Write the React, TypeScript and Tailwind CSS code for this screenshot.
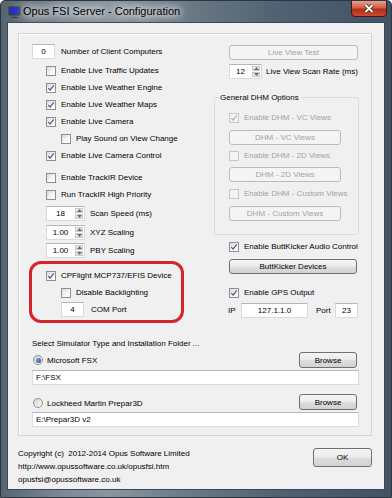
import React from 'react';

type Children = { children?: React.ReactNode };

const Check = ({ checked, disabled }: { checked?: boolean; disabled?: boolean }) => (
  <span
    className={
      disabled
        ? 'w-[10px] h-[10px] shrink-0 border border-[#c6c6c6] bg-[#f4f4f4] flex items-center justify-center'
        : 'w-[10px] h-[10px] shrink-0 border border-[#8e8f8f] bg-[linear-gradient(135deg,#d9d9d9,#f7f7f7_60%,#ffffff)] flex items-center justify-center'
    }
  >
    {checked && (
      <svg width="8" height="8" viewBox="0 0 8 8">
        <path
          d="M1.3 4.1 L3.1 6.1 L6.8 1.4"
          stroke={disabled ? '#b0b0b0' : '#4a5a8c'}
          strokeWidth="1.3"
          fill="none"
        />
      </svg>
    )}
  </span>
);

const CheckRow = ({
  label,
  checked,
  disabled,
  indent = 'pl-[14px]',
}: {
  label: string;
  checked?: boolean;
  disabled?: boolean;
  indent?: string;
}) => (
  <div className={`h-[17px] flex items-center gap-[5px] ${indent}`}>
    <Check checked={checked} disabled={disabled} />
    <span className={disabled ? 'text-[#a2a2a2]' : 'text-black'}>{label}</span>
  </div>
);

const Btn = ({
  children,
  disabled,
  className = '',
}: Children & { disabled?: boolean; className?: string }) => (
  <div
    className={
      (disabled
        ? 'border border-[#b8bcbf] bg-[#f4f4f4] text-[#a2a2a2]'
        : 'border border-[#707070] bg-[linear-gradient(#f4f4f4,#ececec_48%,#dedede_52%,#d2d2d2)] text-black') +
      ' rounded-[3px] flex items-center justify-center ' +
      className
    }
  >
    {children}
  </div>
);

const TextBox = ({
  value,
  className = '',
  align = 'center',
}: {
  value: string;
  className?: string;
  align?: 'center' | 'left';
}) => (
  <div
    className={
      'h-[15px] bg-white border border-[#d7dadf] border-t-[#b3b6bb] flex items-center ' +
      (align === 'center' ? 'justify-center ' : 'justify-start pl-[3px] ') +
      className
    }
  >
    {value}
  </div>
);

const Spinner = ({ value, width }: { value: string; width: string }) => (
  <div className={`h-[15px] ${width} bg-white border border-[#d7dadf] border-t-[#b3b6bb] flex`}>
    <div className="flex-1 flex items-center justify-center">{value}</div>
    <div className="w-[10px] flex flex-col p-[1px] gap-[1px]">
      <div className="flex-1 bg-[linear-gradient(#f3f3f3,#dcdcdc)] border border-[#c9c9c9] flex items-center justify-center">
        <svg width="5" height="3" viewBox="0 0 5 3">
          <path d="M0 3 L2.5 0 L5 3 Z" fill="#6d6d6d" />
        </svg>
      </div>
      <div className="flex-1 bg-[linear-gradient(#f3f3f3,#dcdcdc)] border border-[#c9c9c9] flex items-center justify-center">
        <svg width="5" height="3" viewBox="0 0 5 3">
          <path d="M0 0 L2.5 3 L5 0 Z" fill="#6d6d6d" />
        </svg>
      </div>
    </div>
  </div>
);

const Radio = ({ selected }: { selected?: boolean }) => (
  <span className="w-[10px] h-[10px] shrink-0 rounded-full border border-[#8e8f8f] bg-[linear-gradient(135deg,#d4d4d4,#fafafa)] flex items-center justify-center">
    {selected && (
      <span className="w-[5px] h-[5px] rounded-full bg-[radial-gradient(circle_at_35%_35%,#7fa0c8,#1b3f6e)]" />
    )}
  </span>
);

const TitleBar = () => (
  <div className="h-[21px] flex items-start relative">
    <div className="pl-[7px] pt-[5px]">
      <svg width="13" height="12" viewBox="0 0 13 12">
        <rect x="0.5" y="0.5" width="12" height="9" fill="#3c3c3c" />
        <rect x="2" y="2" width="9" height="6" fill="#1e2fd6" />
        <rect x="5" y="9.5" width="3" height="1.5" fill="#5a5a5a" />
        <rect x="3" y="11" width="7" height="1" fill="#3c3c3c" />
      </svg>
    </div>
    <div className="ml-[2px] pt-[4px] text-[11px] leading-[12px] text-black [text-shadow:0_0_6px_#fff,0_0_10px_#fff,0_0_14px_rgba(255,255,255,0.9)]">
      Opus FSI Server - Configuration
    </div>
    <div className="ml-auto mr-[4px] w-[36px] h-[17px] -mt-px rounded-b-[4px] border border-[#4a1410] bg-[linear-gradient(#e8a08d,#cf6048_45%,#b32e18_55%,#cc4a30)] flex items-center justify-center">
      <svg width="10" height="9" viewBox="0 0 10 9">
        <path d="M1.5 1 L8.5 8 M8.5 1 L1.5 8" stroke="#3a1a14" strokeWidth="3.4" />
        <path d="M1.5 1 L8.5 8 M8.5 1 L1.5 8" stroke="#ffffff" strokeWidth="1.9" />
      </svg>
    </div>
  </div>
);

const App: React.FC = () => {
  return (
    <div className="w-[392px] h-[498px] overflow-hidden border border-[#2b3641] rounded-t-[5px] bg-[linear-gradient(90deg,#56646f,#7b8893_15%,#8a969f_28%,#6a7985_48%,#4f6172_72%,#405365)] flex flex-col font-['Liberation_Sans',Arial,sans-serif] text-[8px] leading-[11px] text-black">
      <TitleBar />

      <div className="mx-[6px] mb-[7px] flex-1 border border-[#3b4754] bg-[#f0f0f0] flex flex-col">
        {/* Main settings panel */}
        <div className="ml-[10px] mt-[10px] w-[354px] h-[403px] border border-[#d5d5d5] shadow-[inset_1px_1px_0_#fff] pl-[13px] pr-[12px] pt-[10px] flex flex-col">
          <div className="flex">
            {/* Left column */}
            <div className="w-[182px] flex flex-col">
              <div className="h-[15px] flex items-center gap-[6px]">
                <TextBox value="0" className="w-[23px]" />
                <span>Number of Client Computers</span>
              </div>
              <div className="mt-[3px]">
                <CheckRow label="Enable Live Traffic Updates" />
                <CheckRow label="Enable Live Weather Engine" checked />
                <CheckRow label="Enable Live Weather Maps" checked />
                <CheckRow label="Enable Live Camera" checked />
                <CheckRow label="Play Sound on View Change" indent="pl-[29px]" />
                <CheckRow label="Enable Live Camera Control" checked />
              </div>
              <div className="mt-[5px]">
                <CheckRow label="Enable TrackIR Device" />
                <CheckRow label="Run TrackIR High Priority" />
              </div>
              <div className="mt-[3px] pl-[14px] flex items-center gap-[5px]">
                <Spinner value="18" width="w-[39px]" />
                <span>Scan Speed (ms)</span>
              </div>
              <div className="mt-[4px] pl-[14px] flex items-center gap-[5px]">
                <Spinner value="1.00" width="w-[39px]" />
                <span>XYZ Scaling</span>
              </div>
              <div className="mt-[3px] pl-[14px] flex items-center gap-[5px]">
                <Spinner value="1.00" width="w-[39px]" />
                <span>PBY Scaling</span>
              </div>

              {/* Highlighted CPFlight block */}
              <div className="mt-[3px] -ml-[3px] w-[155px] h-[62px] border-[3px] border-[#d6232c] rounded-[12px] pt-[3px]">
                <CheckRow label="CPFlight MCP737/EFIS Device" checked />
                <CheckRow label="Disable Backlighting" indent="pl-[29px]" />
                <div className="mt-px pl-[29px] flex items-center gap-[7px]">
                  <TextBox value="4" className="w-[23px]" />
                  <span>COM Port</span>
                </div>
              </div>
            </div>

            {/* Right column */}
            <div className="w-[145px] flex flex-col">
              <Btn disabled className="mt-px ml-[15px] w-[129px] h-[15px]">
                Live View Test
              </Btn>
              <div className="mt-[4px] ml-[15px] flex items-center gap-[4px]">
                <Spinner value="12" width="w-[33px]" />
                <span>Live View Scan Rate (ms)</span>
              </div>

              <fieldset className="mt-[13px] w-[145px] h-[143px] border border-[#d5dfe5] rounded-[3px] px-0 pb-0">
                <legend className="ml-[4px] px-[1px] leading-[11px]">General DHM Options</legend>
                <div className="pl-[14px] pt-[6px] flex flex-col">
                  <CheckRow label="Enable DHM - VC Views" checked disabled indent="pl-0" />
                  <Btn disabled className="mt-[4px] w-[112px] h-[15px]">
                    DHM - VC Views
                  </Btn>
                  <div className="mt-[2px]">
                    <CheckRow label="Enable DHM - 2D Views" disabled indent="pl-0" />
                  </div>
                  <Btn disabled className="mt-[3px] w-[112px] h-[15px]">
                    DHM - 2D Views
                  </Btn>
                  <div className="mt-[3px]">
                    <CheckRow label="Enable DHM - Custom Views" disabled indent="pl-0" />
                  </div>
                  <Btn disabled className="mt-[4px] w-[112px] h-[15px]">
                    DHM - Custom Views
                  </Btn>
                </div>
              </fieldset>

              <div className="mt-[3px] ml-[15px]">
                <CheckRow label="Enable ButtKicker Audio Control" checked indent="pl-0" />
              </div>
              <Btn className="mt-[4px] ml-[15px] w-[128px] h-[15px]">ButtKicker Devices</Btn>
              <div className="mt-[10px] ml-[15px]">
                <CheckRow label="Enable GPS Output" checked indent="pl-0" />
              </div>
              <div className="mt-[2px] ml-[14px] flex items-center">
                <span className="w-[13px]">IP</span>
                <TextBox value="127.1.1.0" className="w-[67px]" />
                <span className="ml-[8px] w-[19px]">Port</span>
                <TextBox value="23" className="w-[23px]" />
              </div>
            </div>
          </div>

          {/* Simulator selection */}
          <div className="mt-[13px] h-[14px] flex items-center">
            Select Simulator Type and Installation Folder ...
          </div>
          <div className="mt-[2px] h-[16px] flex items-center">
            <div className="flex items-center gap-[4px] pl-px">
              <Radio selected />
              <span>Microsoft FSX</span>
            </div>
            <Btn className="ml-auto mr-[2px] w-[58px] h-[16px]">Browse</Btn>
          </div>
          <TextBox value="F:\FSX" align="left" className="mt-[2px] w-[327px]" />
          <div className="mt-[9px] h-[16px] flex items-center">
            <div className="flex items-center gap-[4px] pl-px mt-[2px]">
              <Radio />
              <span>Lockheed Martin Prepar3D</span>
            </div>
            <Btn className="ml-auto mr-[2px] w-[58px] h-[16px]">Browse</Btn>
          </div>
          <TextBox value="E:\Prepar3D v2" align="left" className="mt-[2px] w-[327px]" />
        </div>

        {/* Footer */}
        <div className="ml-[10px] w-[354px] mt-[11px] flex items-start">
          <div className="flex flex-col leading-[13px]">
            <span>Copyright (c)&nbsp; 2012-2014 Opus Software Limited</span>
            <span>http://www.opussoftware.co.uk/opusfsi.htm</span>
            <span>opusfsi@opussoftware.co.uk</span>
          </div>
          <Btn className="ml-auto mt-px w-[59px] h-[19px]">OK</Btn>
        </div>
      </div>
    </div>
  );
};

export default App;
